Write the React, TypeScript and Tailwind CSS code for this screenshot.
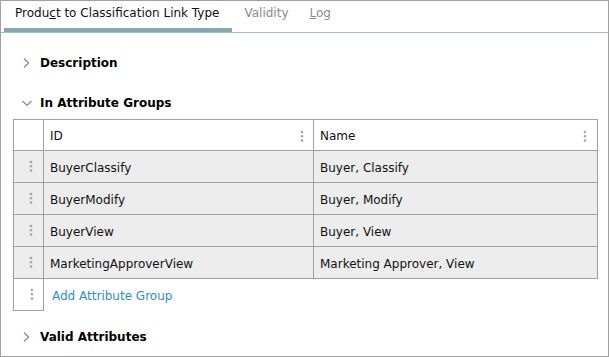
import React from "react";

const Kebab = () => (
  <svg width="4" height="13" viewBox="0 0 4 13" className="shrink-0">
    <circle cx="2" cy="2" r="1.3" fill="#a8a8a8" />
    <circle cx="2" cy="6.3" r="1.3" fill="#a8a8a8" />
    <circle cx="2" cy="10.6" r="1.3" fill="#a8a8a8" />
  </svg>
);

const ChevronRight = () => (
  <svg width="10" height="12" viewBox="0 0 10 12" className="shrink-0">
    <path d="M3 1.5 L7.5 6 L3 10.5" fill="none" stroke="#8a8a8a" strokeWidth="1.2" />
  </svg>
);

const ChevronDown = () => (
  <svg width="12" height="10" viewBox="0 0 12 10" className="shrink-0">
    <path d="M1.5 3 L6 7.5 L10.5 3" fill="none" stroke="#8a8a8a" strokeWidth="1.2" />
  </svg>
);

const rows = [
  ["BuyerClassify", "Buyer, Classify"],
  ["BuyerModify", "Buyer, Modify"],
  ["BuyerView", "Buyer, View"],
  ["MarketingApproverView", "Marketing Approver, View"],
];

export default function App() {
  return (
    <div
      className="w-[609px] h-[357px] border border-[#a0a0a0] bg-white text-[12px] leading-[16px] text-[#111] overflow-hidden"
      style={{ fontFamily: '"DejaVu Sans", Verdana, sans-serif' }}
    >
      {/* Tabs */}
      <div className="flex h-[32px] border-b border-[#a3bfc5] pl-[3px]">
        <div className="pl-[11px] pr-[13px] pt-[4px] border-b-4 border-[#82a8b0] text-[#111]">
          Produ<span className="underline">c</span>t to Classification Link Type
        </div>
        <div className="pl-[12px] pr-[10px] pt-[4px] text-[#8c8c8c]">Validity</div>
        <div className="px-[11px] pt-[4px] text-[#8c8c8c]">
          <span className="underline">L</span>og
        </div>
      </div>

      <div className="pl-[12px] pr-[10px] pt-[22px]">
        {/* Description */}
        <div className="flex items-center h-[16px] pl-[8px] font-bold text-black">
          <ChevronRight />
          <span className="ml-[9px]">Description</span>
        </div>

        {/* In Attribute Groups */}
        <div className="flex items-center h-[16px] pl-[8px] mt-[24px] font-bold text-black">
          <ChevronDown />
          <span className="ml-[7px]">In Attribute Groups</span>
        </div>

        {/* Table */}
        <div className="mt-[8px] w-[585px]">
          <div className="border-x border-t border-[#a0a0a0]">
            <div className="flex h-[31px] border-b border-[#a0a0a0] bg-white">
              <div className="w-[30px] border-r border-[#a0a0a0]" />
              <div className="w-[270px] border-r border-[#a0a0a0] flex items-center pl-[6px] pr-[9px] pt-[2px]">
                <span className="flex-1">ID</span>
                <Kebab />
              </div>
              <div className="flex-1 flex items-center pl-[6px] pr-[10px] pt-[2px]">
                <span className="flex-1">Name</span>
                <Kebab />
              </div>
            </div>
            {rows.map(([id, name]) => (
              <div key={id} className="flex h-[32px] border-b border-[#a0a0a0] bg-[#ededed]">
                <div className="w-[30px] border-r border-[#a0a0a0] flex items-center pl-[15px]">
                  <Kebab />
                </div>
                <div className="w-[270px] border-r border-[#a0a0a0] flex items-center pl-[6px] pt-[2px]">
                  {id}
                </div>
                <div className="flex-1 flex items-center pl-[6px] pt-[2px]">{name}</div>
              </div>
            ))}
          </div>
          <div className="flex h-[32px]">
            <div className="w-[31px] border-x border-b border-[#a0a0a0] flex items-center pl-[16px]">
              <Kebab />
            </div>
            <div className="flex items-center pl-[8px] pt-[1px] text-[#2a8fd4]">Add Attribute Group</div>
          </div>
        </div>

        {/* Valid Attributes */}
        <div className="flex items-center h-[16px] pl-[8px] mt-[18px] font-bold text-black">
          <ChevronRight />
          <span className="ml-[9px]">Valid Attributes</span>
        </div>
      </div>
    </div>
  );
}
